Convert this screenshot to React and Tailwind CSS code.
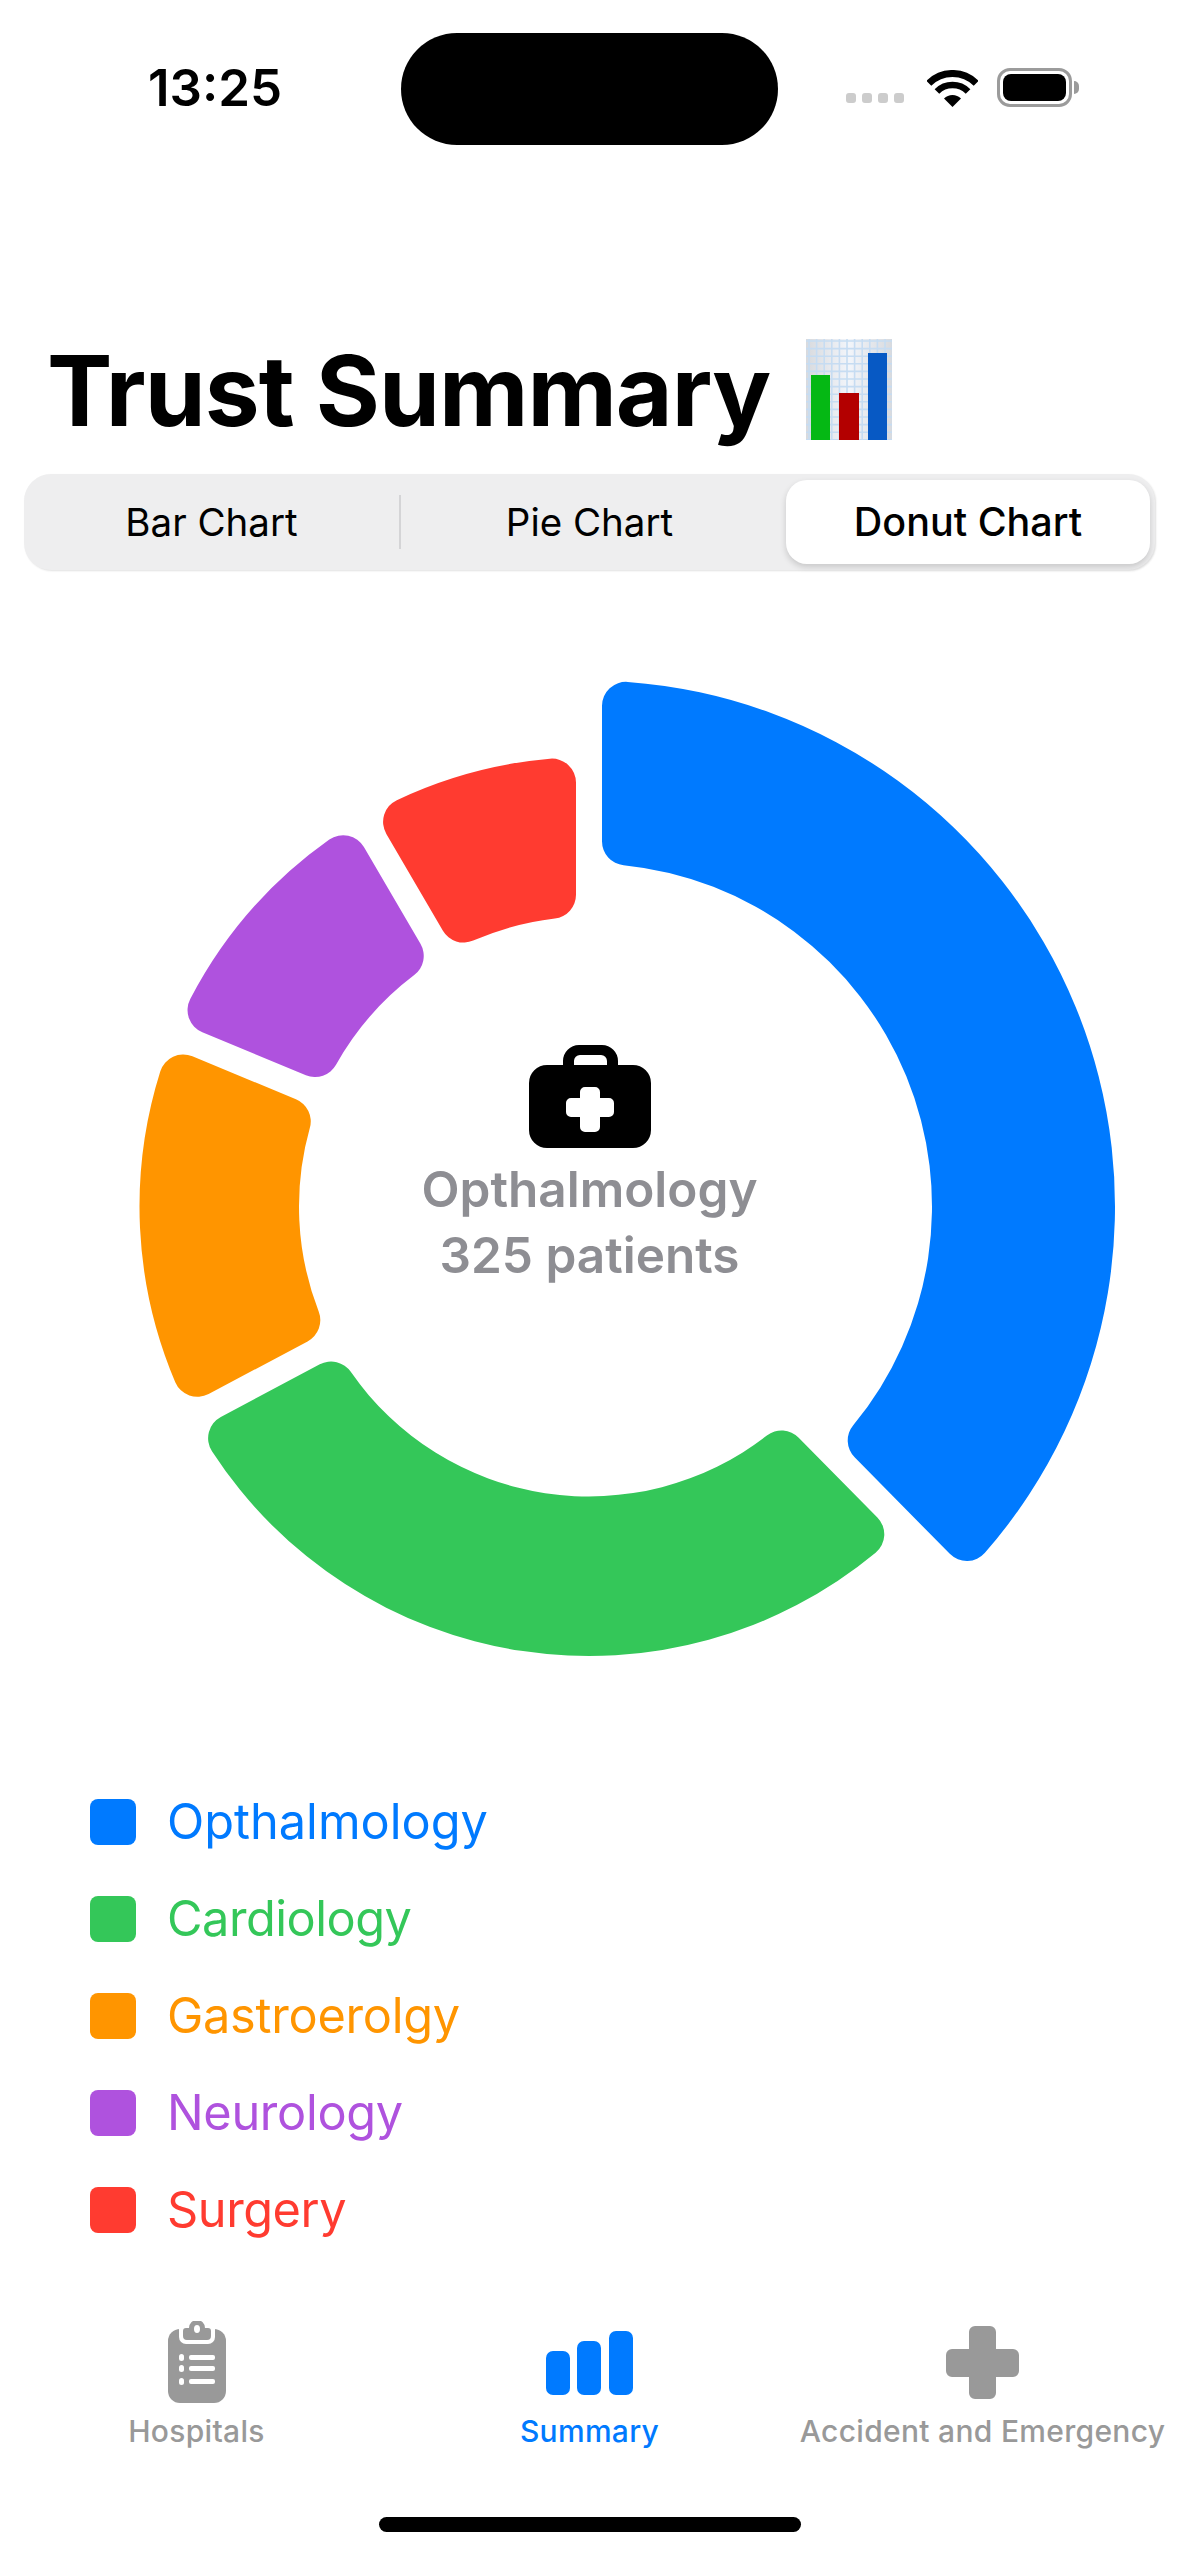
const CX = 589;
const CY = 529.5;

function pt(r, a) {
  const t = (a * Math.PI) / 180;
  return [r * Math.sin(t), -r * Math.cos(t)];
}

function sectorPath(a0, a1, R, r, d, c) {
  const corner = (rad, a, side, outer) => {
    const u = pt(1, a);
    const n = side > 0 ? [-u[1], u[0]] : [u[1], -u[0]];
    const cr = outer ? rad - c : rad + c;
    const t = Math.sqrt(cr * cr - (d + c) * (d + c));
    const center = [t * u[0] + (d + c) * n[0], t * u[1] + (d + c) * n[1]];
    const line = [t * u[0] + d * n[0], t * u[1] + d * n[1]];
    const s = rad / cr;
    const arc = [center[0] * s, center[1] * s];
    return { line, arc };
  };
  const f = (p) => `${(p[0] + CX).toFixed(2)} ${(p[1] + CY).toFixed(2)}`;
  const so = corner(R, a0, 1, true);
  const eo = corner(R, a1, -1, true);
  const ei = corner(r, a1, -1, false);
  const si = corner(r, a0, 1, false);
  const large = a1 - a0 > 180 ? 1 : 0;
  return [
    `M${f(so.arc)}`,
    `A${R} ${R} 0 ${large} 1 ${f(eo.arc)}`,
    `A${c} ${c} 0 0 1 ${f(eo.line)}`,
    `L${f(ei.line)}`,
    `A${c} ${c} 0 0 1 ${f(ei.arc)}`,
    `A${r} ${r} 0 ${large} 0 ${f(si.arc)}`,
    `A${c} ${c} 0 0 1 ${f(si.line)}`,
    `L${f(so.line)}`,
    `A${c} ${c} 0 0 1 ${f(so.arc)}`,
    "Z",
  ].join(" ");
}

const sectors = [
  { a0: 0, a1: 135.4, R: 526, r: 343, fill: "#007AFF" },
  { a0: 135.4, a1: 242, R: 449.5, r: 290, fill: "#34C759" },
  { a0: 242, a1: 292.5, R: 449.5, r: 290, fill: "#FF9500" },
  { a0: 292.5, a1: 329.7, R: 449.5, r: 290, fill: "#AF52DE" },
  { a0: 329.7, a1: 360, R: 449.5, r: 290, fill: "#FF3B30" },
];

const legend = [
  { name: "Opthalmology", bg: "bg-[#007AFF]", text: "text-[#007AFF]" },
  { name: "Cardiology", bg: "bg-[#34C759]", text: "text-[#34C759] tracking-[-0.5px]" },
  { name: "Gastroerolgy", bg: "bg-[#FF9500]", text: "text-[#FF9500] tracking-[-0.27px]" },
  { name: "Neurology", bg: "bg-[#AF52DE]", text: "text-[#AF52DE] tracking-[-0.33px]" },
  { name: "Surgery", bg: "bg-[#FF3B30]", text: "text-[#FF3B30] tracking-[-0.45px]" },
];

function Wifi() {
  return (
    <svg width="51" height="37" viewBox="0 0 51 37" className="mt-[1px]">
      <path d="M1.8 13.3A33.5 33.5 0 0 1 49.2 13.3" fill="none" stroke="#000" strokeWidth="7" />
      <path d="M9.94 21.44A22 22 0 0 1 41.06 21.44" fill="none" stroke="#000" strokeWidth="6.5" />
      <path d="M25.5 37L17 28.5A12 12 0 0 1 34 28.5Z" fill="#000" />
    </svg>
  );
}

function Battery() {
  return (
    <div className="flex items-center">
      <div className="w-[75px] h-[39px] rounded-[13px] border-[3px] border-[#9b9b9b] p-[3px]">
        <div className="w-full h-full rounded-[8px] bg-black" />
      </div>
      <div className="ml-[2px] w-[5px] h-[13px] rounded-r-full bg-[#9b9b9b]" />
    </div>
  );
}

function ChartEmoji() {
  const vs = [];
  for (let i = 0; i < 12; i++) vs.push(3 + i * 7.6);
  const hs = [];
  for (let i = 0; i < 14; i++) hs.push(2 + i * 7.6);
  return (
    <svg width="86" height="101" viewBox="0 0 86 101" className="mt-[1px] ml-[36px] shrink-0">
      <defs>
        <linearGradient id="bgr" x1="0" y1="0" x2="1" y2="0">
          <stop offset="0" stopColor="#d8dade" />
          <stop offset="0.5" stopColor="#f2f5fa" />
          <stop offset="1" stopColor="#d8dade" />
        </linearGradient>
      </defs>
      <rect width="86" height="101" fill="url(#bgr)" />
      {vs.map((x) => (
        <line key={`v${x}`} x1={x} y1="0" x2={x} y2="101" stroke="#c6dcf2" strokeWidth="1.6" />
      ))}
      {hs.map((y) => (
        <line key={`h${y}`} x1="0" y1={y} x2="86" y2={y} stroke="#c6dcf2" strokeWidth="1.6" />
      ))}
      <rect x="5" y="36" width="19" height="65" fill="#05b814" />
      <rect x="33" y="54" width="20" height="47" fill="#b30000" />
      <rect x="62" y="14" width="19" height="87" fill="#0759c4" />
    </svg>
  );
}

function Clipboard() {
  return (
    <svg width="58" height="82" viewBox="0 0 58 82">
      <path
        fillRule="evenodd"
        fill="#999999"
        d="M12 8H46A12 12 0 0 1 58 20V70A12 12 0 0 1 46 82H12A12 12 0 0 1 0 70V20A12 12 0 0 1 12 8Z"
      />
      <path d="M11 8H47V16A7 7 0 0 1 40 23H18A7 7 0 0 1 11 16Z" fill="#fff" />
      <path
        fillRule="evenodd"
        fill="#999999"
        d="M15 10A3 3 0 0 1 18 7H21A8 8 0 0 1 37 7H40A3 3 0 0 1 43 10V15A4 4 0 0 1 39 19H19A4 4 0 0 1 15 15ZM29 4A3 4 0 0 0 29 12A3 4 0 0 0 29 4Z"
      />
      <rect x="11" y="33" width="5" height="7" rx="2.5" fill="#fff" />
      <rect x="11" y="44" width="5" height="7" rx="2.5" fill="#fff" />
      <rect x="11" y="57" width="5" height="7" rx="2.5" fill="#fff" />
      <rect x="21" y="34" width="26" height="5" rx="2" fill="#fff" />
      <rect x="21" y="45" width="26" height="5" rx="2" fill="#fff" />
      <rect x="21" y="58" width="26" height="5" rx="2" fill="#fff" />
    </svg>
  );
}

function Bars() {
  return (
    <svg width="87" height="64" viewBox="0 0 87 64" className="mt-[10px]">
      <rect x="0" y="20" width="24" height="44" rx="7" fill="#007AFF" />
      <rect x="31" y="10" width="24" height="54" rx="7" fill="#007AFF" />
      <rect x="63" y="0" width="24" height="64" rx="7" fill="#007AFF" />
    </svg>
  );
}

function Cross() {
  return (
    <svg width="73" height="73" viewBox="0 0 73 73" className="mt-[5px]">
      <path
        fill="#999999"
        d="M29 0H44A6 6 0 0 1 50 6V23H67A6 6 0 0 1 73 29V45A6 6 0 0 1 67 51H50V67A6 6 0 0 1 44 73H29A6 6 0 0 1 23 67V51H6A6 6 0 0 1 0 45V29A6 6 0 0 1 6 23H23V6A6 6 0 0 1 29 0Z"
      />
    </svg>
  );
}

function MedBag() {
  return (
    <svg width="122" height="103" viewBox="0 0 122 103">
      <path
        fillRule="evenodd"
        d="M50 0H73A16 16 0 0 1 89 16V20H104A18 18 0 0 1 122 38V85A18 18 0 0 1 104 103H18A18 18 0 0 1 0 85V38A18 18 0 0 1 18 20H34V16A16 16 0 0 1 50 0ZM51 10A6 6 0 0 0 45 16V20H78V16A6 6 0 0 0 72 10Z"
      />
      <path
        fill="#fff"
        d="M56 42H66A5 5 0 0 1 71 47V53H80A5 5 0 0 1 85 58V67A5 5 0 0 1 80 72H71V82A5 5 0 0 1 66 87H56A5 5 0 0 1 51 82V72H42A5 5 0 0 1 37 67V58A5 5 0 0 1 42 53H51V47A5 5 0 0 1 56 42Z"
      />
    </svg>
  );
}

function TabItem({ icon, label, color }) {
  return (
    <div className="flex flex-col items-center">
      <div className="h-[92px] flex items-start justify-center">{icon}</div>
      <span className={`text-[30px] leading-[36px] font-medium tracking-[0.3px] whitespace-nowrap ${color}`}>
        {label}
      </span>
    </div>
  );
}

export default function App() {
  return (
    <div className="w-[1179px] h-[2556px] bg-white flex flex-col overflow-hidden font-['Inter','Liberation_Sans',sans-serif]">
      {/* Status bar */}
      <div className="h-[145px] pt-[33px] pl-[148px] pr-[98px] flex items-start">
        <div className="w-[253px] h-[112px] flex items-center pb-[3px]">
          <span className="text-[51px] leading-[60px] font-semibold text-black">13:25</span>
        </div>
        <div className="w-[377px] h-[112px] rounded-full bg-black" />
        <div className="ml-[68px] mt-[35px] flex items-end">
          <div className="flex gap-[6px] mb-[4px]">
            <div className="w-[10px] h-[10px] rounded-[3px] bg-[#cccccc]" />
            <div className="w-[10px] h-[10px] rounded-[3px] bg-[#cccccc]" />
            <div className="w-[10px] h-[10px] rounded-[3px] bg-[#cccccc]" />
            <div className="w-[10px] h-[10px] rounded-[3px] bg-[#cccccc]" />
          </div>
          <div className="ml-[23px]"><Wifi /></div>
          <div className="ml-[19px]"><Battery /></div>
        </div>
      </div>

      {/* Title */}
      <div className="mt-[193px] h-[136px] pl-[47px] flex items-start">
        <h1 className="text-[98px] leading-[106px] font-bold text-black tracking-[-1px] whitespace-nowrap">Trust Summary</h1>
        <ChartEmoji />
      </div>

      {/* Segmented control */}
      <div className="mx-[24px] h-[96px] rounded-[27px] bg-[#eeeeef] flex items-center pr-[5px] shadow-[1px_1px_2px_rgba(0,0,0,0.12)]">
        <div className="w-[375px] pt-[1px] text-center text-[38.5px] text-black">Bar Chart</div>
        <div className="w-[2px] h-[54px] bg-[#d4d4d6]" />
        <div className="w-[377px] pt-[1px] text-center text-[38.5px] text-black">Pie Chart</div>
        <div className="ml-auto w-[364px] h-[84px] pt-[1px] rounded-[21px] bg-white flex items-center justify-center text-[39.5px] font-medium text-black shadow-[0_3px_6px_rgba(0,0,0,0.16)]">
          Donut Chart
        </div>
      </div>

      {/* Chart */}
      <div className="relative mt-[107px] h-[984px]">
        <svg width="1179" height="984" viewBox="0 0 1179 984" className="block">
          {sectors.map((s) => (
            <path key={s.fill} d={sectorPath(s.a0, s.a1, s.R, s.r, 13, 24)} fill={s.fill} />
          ))}
        </svg>
        <div className="absolute left-0 right-0 top-[368px] flex flex-col items-center">
          <MedBag />
          <div className="mt-[8px] text-[49.5px] leading-[66px] font-semibold text-[#8e8e93] text-center">Opthalmology</div>
          <div className="text-[49.5px] leading-[66px] font-semibold text-[#8e8e93] text-center">325 patients</div>
        </div>
      </div>

      {/* Legend */}
      <div className="mt-[138px] pl-[90px] flex flex-col gap-[51px]">
        {legend.map((l) => (
          <div key={l.name} className="flex items-center h-[46px]">
            <div className={`w-[46px] h-[46px] rounded-[8px] ${l.bg}`} />
            <span className={`ml-[31px] text-[48.7px] leading-[60px] ${l.text}`}>{l.name}</span>
          </div>
        ))}
      </div>

      {/* Tab bar */}
      <div className="mt-[88px] grid grid-cols-3">
        <TabItem icon={<Clipboard />} label="Hospitals" color="text-[#999999]" />
        <TabItem icon={<Bars />} label="Summary" color="text-[#007AFF]" />
        <TabItem icon={<Cross />} label="Accident and Emergency" color="text-[#999999]" />
      </div>

      {/* Home indicator */}
      <div className="mt-auto mb-[24px] mx-auto w-[422px] h-[15px] rounded-full bg-black" />
    </div>
  );
}
